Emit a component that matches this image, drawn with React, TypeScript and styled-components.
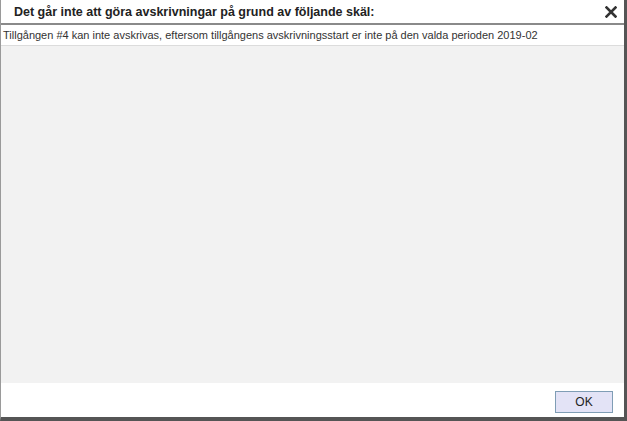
import React from "react";
import styled, { createGlobalStyle } from "styled-components";

const Global = createGlobalStyle`
  html, body {
    margin: 0;
    padding: 0;
    background: #fff;
  }
  body {
    font-family: "Liberation Sans", Arial, sans-serif;
  }
`;

export default function App() {
  return (
    <>
      <Global />
      <Dialog>
        <Header>
          <Title>Det går inte att göra avskrivningar på grund av följande skäl:</Title>
          <CloseBtn aria-label="Stäng">
            <svg width="12" height="12" viewBox="0 0 12 12">
              <path d="M1.5 1.5 L10.5 10.5 M10.5 1.5 L1.5 10.5" stroke="#333" strokeWidth="2.6" strokeLinecap="square" />
            </svg>
          </CloseBtn>
        </Header>
        <Message>
          Tillgången #4 kan inte avskrivas, eftersom tillgångens avskrivningsstart er inte på den valda perioden 2019-02
        </Message>
        <Body />
        <Footer>
          <OkButton>OK</OkButton>
        </Footer>
      </Dialog>
    </>
  );
}

const Dialog = styled.div`
  width: 627px;
  height: 421px;
  box-sizing: border-box;
  display: flex;
  flex-direction: column;
  border-left: 1px solid #9a9a9a;
  border-right: 3px solid #555;
  border-bottom: 4px solid #555;
  background: #fff;
`;

const Header = styled.div`
  height: 23px;
  display: flex;
  align-items: center;
  justify-content: space-between;
  padding: 0 7px 0 13px;
  border-bottom: 2px solid #8a8a8a;
`;

const Title = styled.div`
  font-size: 12.5px;
  font-weight: bold;
  color: #222;
`;

const CloseBtn = styled.button`
  border: none;
  background: none;
  padding: 0;
  display: flex;
  cursor: pointer;
`;

const Message = styled.div`
  height: 20px;
  line-height: 20px;
  padding: 0 2px;
  font-size: 11px;
  color: #333;
  border-bottom: 1px solid #dcdcdc;
`;

const Body = styled.div`
  flex: 1;
  background: #f2f2f2;
`;

const Footer = styled.div`
  height: 34px;
  display: flex;
  align-items: center;
  justify-content: flex-end;
  padding-right: 11px;
`;

const OkButton = styled.button`
  width: 58px;
  height: 22px;
  margin-top: 3px;
  background: #e3e3f6;
  border: 1px solid #7f9db5;
  font-family: "Liberation Sans", Arial, sans-serif;
  font-size: 12px;
  color: #222;
  padding: 0;
`;
